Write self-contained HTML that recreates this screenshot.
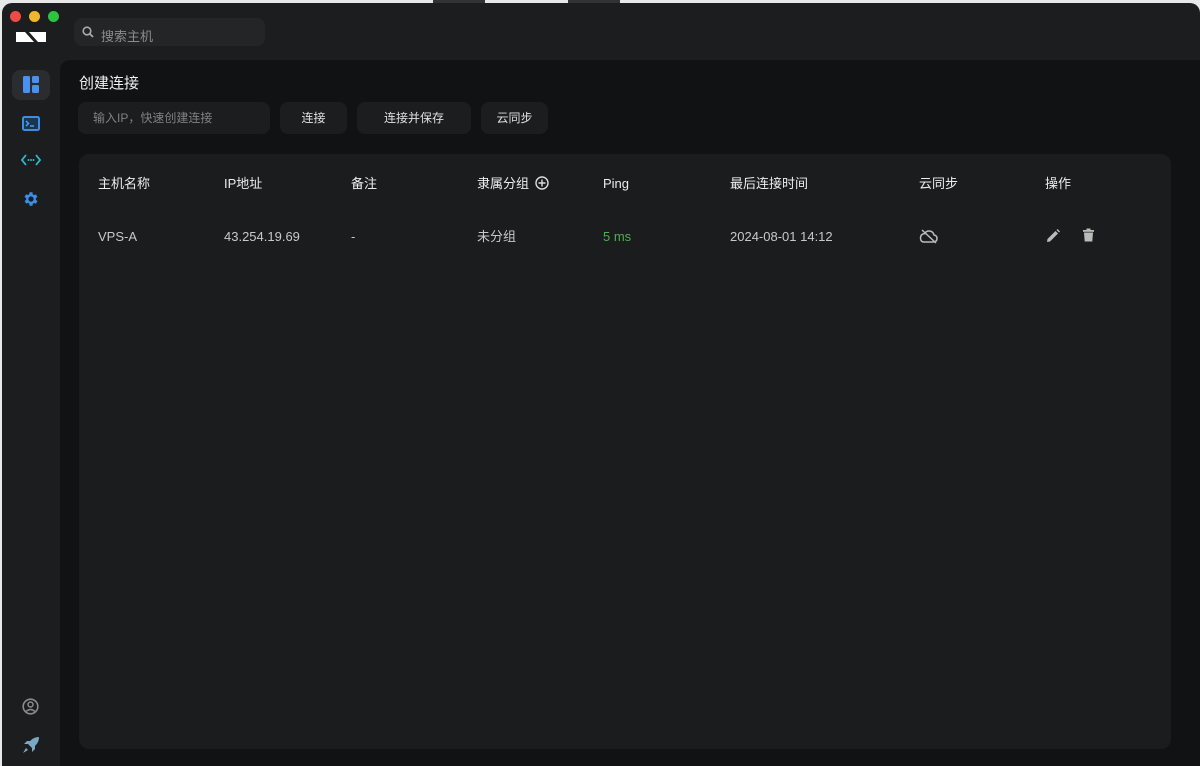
<!DOCTYPE html>
<html><head><meta charset="utf-8"><style>
*{margin:0;padding:0;box-sizing:border-box}
body{width:1200px;height:766px;background:#e8e8e8;font-family:"Liberation Sans","Noto Sans CJK SC",sans-serif;overflow:hidden;position:relative}
.win{position:absolute;left:2px;top:3px;width:1198px;height:763px;background:#1c1d1f;border-radius:10px 10px 0 0;overflow:hidden}
.main{position:absolute;left:58px;top:57px;right:0;bottom:0;background:#111214;border-radius:10px 0 0 0}
.dot{position:absolute;top:8px;width:11px;height:11px;border-radius:50%}
.search{position:absolute;left:72px;top:15px;width:191px;height:28px;background:#242527;border-radius:8px;color:#8a8b8d;font-size:13px;padding:11px 0 0 27px;line-height:16px}
.t{position:absolute;color:#e6e6e6;font-size:13px;white-space:nowrap}
.btn{position:absolute;top:99px;height:32px;background:#1c1d1f;border-radius:8px;color:#e0e0e0;font-size:12px;line-height:32px;text-align:center}
.card{position:absolute;left:77px;top:151px;width:1092px;height:595px;background:#1b1c1e;border-radius:10px}
.h{position:absolute;top:20px;height:20px;line-height:20px;color:#ededed;font-size:13px;white-space:nowrap}
.c{position:absolute;top:73px;height:20px;line-height:20px;color:#c8c8c8;font-size:13px;white-space:nowrap}
</style></head><body>
<div style="position:absolute;left:433px;top:0;width:52px;height:3px;background:#333"></div>
<div style="position:absolute;left:568px;top:0;width:52px;height:3px;background:#333"></div>
<div class="win">
<div class="dot" style="left:8px;background:#ee4b45"></div>
<div class="dot" style="left:27px;background:#f0b72d"></div>
<div class="dot" style="left:46px;background:#2cc440"></div>
<svg style="position:absolute;left:14px;top:28px" width="30" height="12"><path d="M0 1H9L18 11H0Z M13 1H30V11H22Z" fill="#fff"/></svg>
<div class="search"><svg style="position:absolute;left:8px;top:8px" width="12" height="12"><circle cx="5" cy="5" r="3.8" stroke="#aaa" stroke-width="1.6" fill="none"/><path d="M8 8L11 11" stroke="#aaa" stroke-width="1.8"/></svg>搜索主机</div>
<div style="position:absolute;left:10px;top:67px;width:38px;height:30px;background:#2b2c30;border-radius:8px"></div>
<svg style="position:absolute;left:21px;top:73px" width="16" height="17"><rect x="0" y="0" width="7" height="17" rx="1.5" fill="#4a90f0"/><rect x="9" y="0" width="7" height="7" rx="1.5" fill="#4a90f0"/><rect x="9" y="9" width="7" height="8" rx="1.5" fill="#4a90f0"/></svg>
<svg style="position:absolute;left:20px;top:113px" width="18" height="15"><rect x="1" y="1" width="16" height="13" rx="1.5" stroke="#3b8ee8" stroke-width="2" fill="#1b3550"/><path d="M4 5L6.5 7.5L4 10M8 10H12" stroke="#4aa0f0" stroke-width="1.5" fill="none"/></svg>
<svg style="position:absolute;left:19px;top:151px" width="20" height="12"><path d="M5 1L1 6L5 11M15 1L19 6L15 11" stroke="#2fb8c9" stroke-width="1.8" fill="none"/><circle cx="7.5" cy="6" r="1" fill="#2fb8c9"/><circle cx="10" cy="6" r="1" fill="#2fb8c9"/><circle cx="12.5" cy="6" r="1" fill="#2fb8c9"/></svg>
<svg style="position:absolute;left:20px;top:187px" width="18" height="18" viewBox="0 0 24 24"><path fill="#3b8ee8" d="M19.4 13a7.5 7.5 0 000-2l2.1-1.6-2-3.5-2.5 1a7 7 0 00-1.7-1L15 3h-4l-.4 2.7a7 7 0 00-1.7 1l-2.5-1-2 3.5L6.6 11a7.5 7.5 0 000 2l-2.1 1.6 2 3.5 2.5-1a7 7 0 001.7 1L11 21h4l.4-2.7a7 7 0 001.7-1l2.5 1 2-3.5zM13 15.5a3.5 3.5 0 110-7 3.5 3.5 0 010 7z" transform="translate(-1 0)"/></svg>
<svg style="position:absolute;left:20px;top:695px" width="17" height="17"><circle cx="8.5" cy="8.5" r="7.3" stroke="#8a8b8d" stroke-width="1.6" fill="none"/><circle cx="8.5" cy="6.5" r="2.5" stroke="#8a8b8d" stroke-width="1.5" fill="none"/><path d="M4 13.5Q8.5 9.5 13 13.5" stroke="#8a8b8d" stroke-width="1.5" fill="none"/></svg>
<svg style="position:absolute;left:20px;top:733px" width="18" height="18"><path d="M17 1Q10 1 6 8L10 12Q17 8 17 1Z" fill="#7aa9c4"/><path d="M6 8L2 8L5 5L9 5Z M10 12L10 16L13 13L13 9Z" fill="#7aa9c4"/><path d="M4 12L1 17L6 14Z" fill="#7aa9c4"/></svg>
<div class="main"></div>
<div class="t" style="left:77px;top:69px;font-size:15px;color:#f0f0f0">创建连接</div>
<div style="position:absolute;left:76px;top:99px;width:192px;height:32px;background:#1c1d1f;border-radius:8px;color:#808184;font-size:12px;line-height:32px;padding-left:15px">输入IP，快速创建连接</div>
<div class="btn" style="left:278px;width:67px">连接</div>
<div class="btn" style="left:355px;width:114px">连接并保存</div>
<div class="btn" style="left:479px;width:67px">云同步</div>
<div class="card">
<div class="h" style="left:19px">主机名称</div>
<div class="h" style="left:145px">IP地址</div>
<div class="h" style="left:272px">备注</div>
<div class="h" style="left:398px">隶属分组 <svg style="vertical-align:-2px;margin-left:2px" width="14" height="14"><circle cx="7" cy="7" r="6" stroke="#ddd" stroke-width="1.4" fill="none"/><path d="M7 3.5V10.5M3.5 7H10.5" stroke="#ddd" stroke-width="1.4"/></svg></div>
<div class="h" style="left:524px">Ping</div>
<div class="h" style="left:651px">最后连接时间</div>
<div class="h" style="left:840px">云同步</div>
<div class="h" style="left:966px">操作</div>
<div class="c" style="left:19px">VPS-A</div>
<div class="c" style="left:145px">43.254.19.69</div>
<div class="c" style="left:272px">-</div>
<div class="c" style="left:398px">未分组</div>
<div class="c" style="left:524px;color:#4caf50">5 ms</div>
<div class="c" style="left:651px">2024-08-01 14:12</div>
<svg style="position:absolute;left:840px;top:75px" width="19" height="15"><path d="M5 13H14Q18 13 18 9.5Q18 6.5 15 6Q14 2 10 2Q7 2 6 4.5Q1.5 5 1.5 9Q1.5 13 5 13Z" stroke="#bbb" stroke-width="1.5" fill="none"/><path d="M3 1L17 14" stroke="#bbb" stroke-width="1.5"/></svg>
<svg style="position:absolute;left:967px;top:75px" width="14" height="14"><path d="M1 13L1.5 10L9.5 2L12 4.5L4 12.5Z" fill="#bbb"/><path d="M10.5 1L11.5 0L14 2.5L13 3.5Z" fill="#bbb"/></svg>
<svg style="position:absolute;left:1004px;top:74px" width="11" height="14"><rect x="0" y="2" width="11" height="1.8" fill="#bbb"/><rect x="3.5" y="0.5" width="4" height="2" fill="#bbb"/><path d="M1 4.5H10L9.3 13.5H1.7Z" fill="#bbb"/></svg>
</div>
</div>
</body></html>
